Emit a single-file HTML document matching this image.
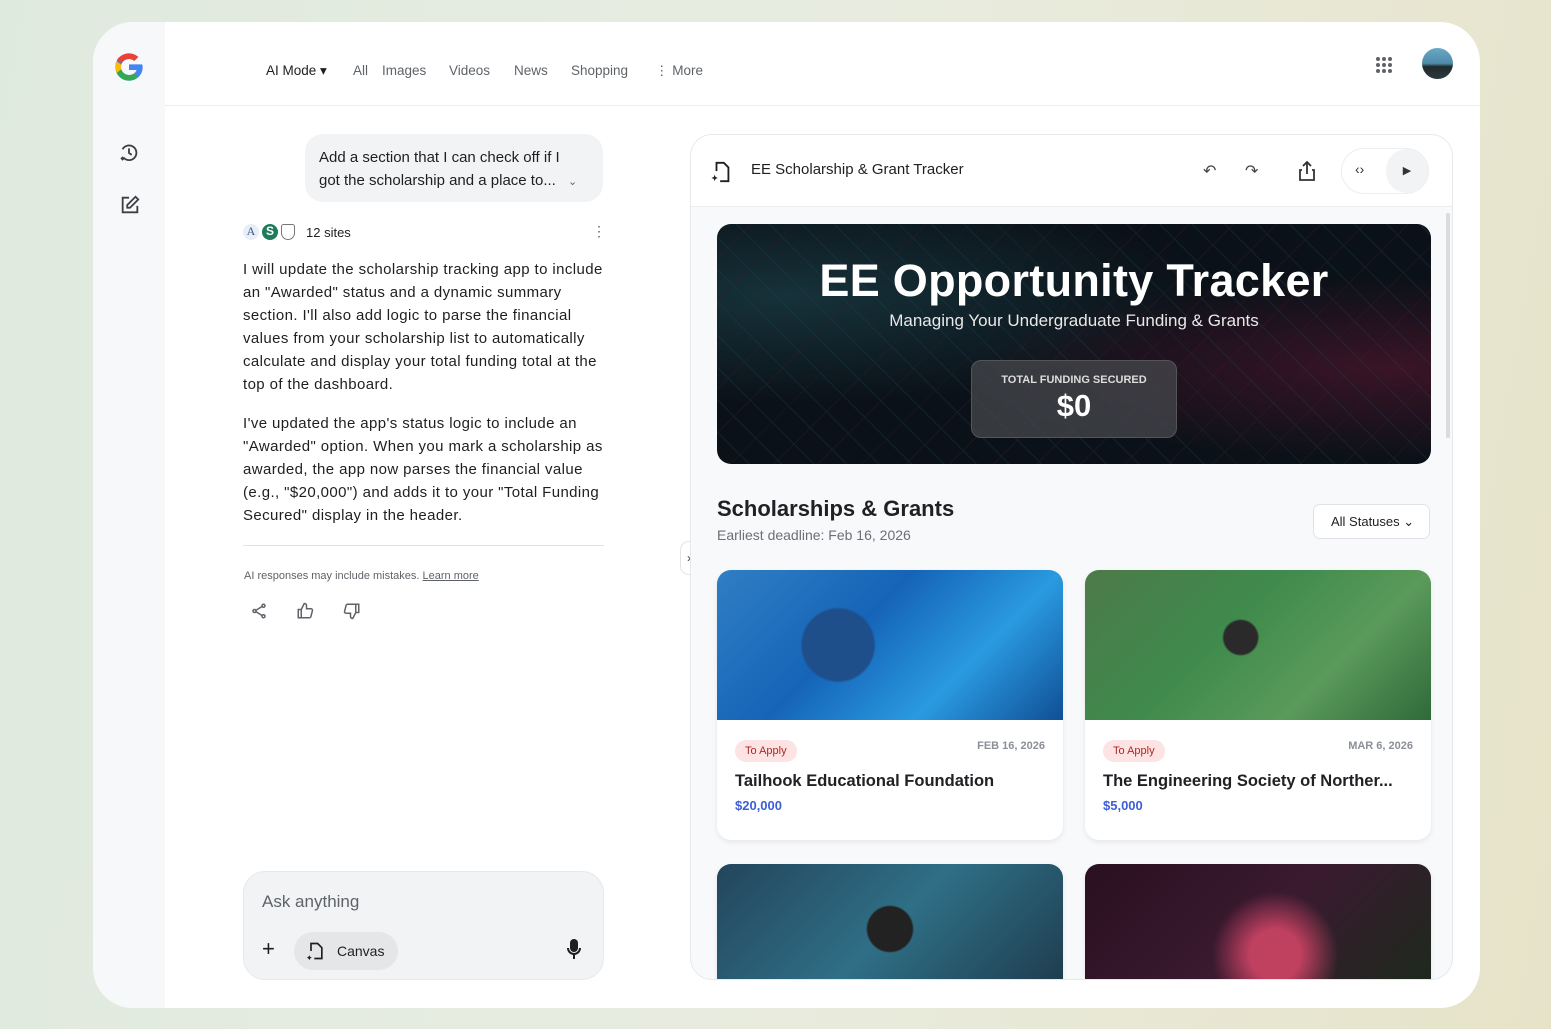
<!DOCTYPE html>
<html><head><meta charset="utf-8"><style>
*{box-sizing:border-box;margin:0;padding:0}
body{width:1551px;height:1029px;overflow:hidden;font-family:"Liberation Sans",sans-serif;background:linear-gradient(100deg,#dfeadf 0%,#e8ece0 50%,#e7e3c9 100%);position:relative;color:#1f1f1f}
.win{position:absolute;left:93px;top:22px;width:1387px;height:986px;background:#fff;border-radius:40px;overflow:hidden}
.side{position:absolute;left:0;top:0;width:72px;height:100%;background:#f7f8fa}
.hdr{position:absolute;left:72px;top:0;right:0;height:84px;border-bottom:1px solid #eceef0}
.nav{position:absolute;top:41px;font-size:13.5px;color:#5f6368}
.abs{position:absolute}
.bubble{position:absolute;left:212px;top:112px;width:298px;height:68px;background:#f1f3f4;border-radius:18px;padding:12px 14px;font-size:15px;line-height:23px;color:#1f1f1f}
.p{position:absolute;left:150px;width:380px;font-size:15px;line-height:23px;color:#1f1f1f;white-space:nowrap;letter-spacing:.4px}
.canvas{position:absolute;left:597px;top:112px;width:763px;height:846px;border:1px solid #e6e8eb;border-radius:22px;overflow:hidden;background:#f8f9fb}
.chdr{position:absolute;left:0;top:0;width:100%;height:72px;background:#fff;border-bottom:1px solid #eceef0}
.hero{position:absolute;left:26px;top:89px;width:714px;height:240px;border-radius:14px;background:radial-gradient(ellipse at 10% 30%,#16323a 0%,transparent 45%),radial-gradient(ellipse at 95% 60%,#3a1426 0%,transparent 45%),#0b1118;overflow:hidden;text-align:center;color:#fff}
.card{position:absolute;width:346px;background:#fff;border-radius:14px;overflow:hidden;box-shadow:0 2px 6px rgba(0,0,0,.08)}
.img{height:150px}
.tag{position:absolute;left:18px;top:170px;background:#fde3e3;color:#b3261e;font-size:11px;padding:5px 10px;border-radius:12px}
.date{position:absolute;right:18px;top:170px;font-size:11px;color:#8a8f98;font-weight:bold}
.ct{position:absolute;left:18px;top:202px;font-size:16.5px;font-weight:bold;color:#202124}
.amt{position:absolute;left:18px;top:228px;font-size:13px;font-weight:bold;color:#3c5fd6}
</style></head><body>
<div class="win">
 <div class="side">
  <svg class="abs" style="left:20px;top:29px" width="32" height="32" viewBox="0 0 48 48"><path d="M43.6 20H24v8.5h11.3C34 33 29.6 36 24 36c-6.6 0-12-5.4-12-12s5.4-12 12-12c3 0 5.8 1.1 7.9 3l6-6C34.3 5.7 29.4 3.5 24 3.5 12.7 3.5 3.5 12.7 3.5 24S12.7 44.5 24 44.5c11 0 20.5-8 20.5-20.5 0-1.4-.2-2.7-.9-4z" fill="#4285f4"/><path d="M6 13.4l7 5.1C14.8 14.6 19 12 24 12c3 0 5.8 1.1 7.9 3l6-6C34.3 5.7 29.4 3.5 24 3.5c-7.8 0-14.6 4.4-18 9.9z" fill="#ea4335"/><path d="M24 44.5c5.3 0 10.1-2 13.7-5.3l-6.4-5.3C29.3 35.3 26.8 36 24 36c-5.5 0-10-3.6-11.5-8.6l-7 5.4C9 39.9 15.9 44.5 24 44.5z" fill="#34a853"/><path d="M5.5 32.8l7-5.4c-.4-1.1-.5-2.2-.5-3.4s.2-2.3.5-3.4l-7-5.1C4.2 18.2 3.5 21 3.5 24s.7 5.9 2 8.8z" fill="#fbbc05"/></svg>
  <svg class="abs" style="left:25px;top:120px" width="22" height="22" viewBox="0 0 24 24" fill="none" stroke="#3c4043" stroke-width="2"><path d="M5 8a8 8 0 1 1 1 9"/><path d="M12 7v5l3 2"/><path d="M4 18l1 1 1-1-1-1z" fill="#3c4043"/></svg>
  <svg class="abs" style="left:26px;top:172px" width="22" height="22" viewBox="0 0 24 24" fill="none" stroke="#3c4043" stroke-width="2"><path d="M11 4H4v16h16v-7"/><path d="M18 3l3 3-9 9H9v-3z"/></svg>
 </div>
 <div class="hdr">
  <span class="nav" style="left:101px;color:#1f1f1f;top:41px">AI Mode ▾</span>
  <span class="nav" style="left:188px">All</span>
  <span class="nav" style="left:217px">Images</span>
  <span class="nav" style="left:284px">Videos</span>
  <span class="nav" style="left:349px">News</span>
  <span class="nav" style="left:406px">Shopping</span>
  <span class="nav" style="left:490px">⋮ More</span>
  <svg class="abs" style="left:1210px;top:34px" width="18" height="18" viewBox="0 0 18 18" fill="#5f6368"><circle cx="3" cy="3" r="2"/><circle cx="9" cy="3" r="2"/><circle cx="15" cy="3" r="2"/><circle cx="3" cy="9" r="2"/><circle cx="9" cy="9" r="2"/><circle cx="15" cy="9" r="2"/><circle cx="3" cy="15" r="2"/><circle cx="9" cy="15" r="2"/><circle cx="15" cy="15" r="2"/></svg>
  <div class="abs" style="left:1257px;top:26px;width:31px;height:31px;border-radius:50%;background:linear-gradient(#6aa9c6 0%,#4c8aa8 50%,#1f2a2c 60%,#2e3a3a 100%)"></div>
 </div>
 <div class="bubble">Add a section that I can check off if I<br>got the scholarship and a place to... <span style="color:#5f6368;font-size:11px;margin-left:8px">⌄</span></div>
 <div class="abs" style="left:150px;top:202px;font-size:13px;display:flex;align-items:center;gap:3px"><span style="width:16px;height:16px;border-radius:50%;background:#e8eef6;color:#3b5a8a;font-size:12px;text-align:center;font-family:'Liberation Serif'">A</span><span style="width:16px;height:16px;border-radius:50%;background:#1e7b5c;color:#fff;font-size:12px;text-align:center;font-weight:bold">S</span><span style="width:14px;height:16px;border:1.5px solid #777;border-radius:3px 3px 8px 8px"></span><span style="margin-left:8px">12 sites</span></div>
 <div class="abs" style="left:499px;top:201px;color:#5f6368;font-size:14px">⋮</div>
 <div class="p" style="top:236px">I will update the scholarship tracking app to include<br>an "Awarded" status and a dynamic summary<br>section. I'll also add logic to parse the financial<br>values from your scholarship list to automatically<br>calculate and display your total funding total at the<br>top of the dashboard.</div>
 <div class="p" style="top:390px">I've updated the app's status logic to include an<br>"Awarded" option. When you mark a scholarship as<br>awarded, the app now parses the financial value<br>(e.g., "$20,000") and adds it to your "Total Funding<br>Secured" display in the header.</div>
 <div class="abs" style="left:150px;top:523px;width:361px;border-top:1px solid #e3e3e3"></div>
 <div class="abs" style="left:151px;top:548px;font-size:11px;color:#5f6368">AI responses may include mistakes. <u>Learn more</u></div>
 <svg class="abs" style="left:157px;top:580px" width="18" height="18" viewBox="0 0 24 24" fill="none" stroke="#5f6368" stroke-width="2"><circle cx="18" cy="5" r="2"/><circle cx="6" cy="12" r="2"/><circle cx="18" cy="19" r="2"/><path d="M8 11l8-5M8 13l8 5"/></svg>
 <svg class="abs" style="left:203px;top:580px" width="18" height="18" viewBox="0 0 24 24" fill="none" stroke="#5f6368" stroke-width="2"><path d="M7 10v11H3V10zM7 10l4-8c2 0 3 1 3 3v4h6c1 0 2 1 2 2l-2 8c0 1-1 2-2 2H7"/></svg>
 <svg class="abs" style="left:250px;top:580px" width="18" height="18" viewBox="0 0 24 24" fill="none" stroke="#5f6368" stroke-width="2"><path d="M17 14V3h4v11zM17 14l-4 8c-2 0-3-1-3-3v-4H4c-1 0-2-1-2-2l2-8c0-1 1-2 2-2h11"/></svg>
 <div class="abs" style="left:150px;top:849px;width:361px;height:109px;background:#f1f3f4;border-radius:22px;border:1px solid #e6e8ea">
  <div class="abs" style="left:18px;top:20px;font-size:17px;color:#5f6368">Ask anything</div>
  <div class="abs" style="left:18px;top:64px;font-size:22px;color:#1f1f1f">+</div>
  <div class="abs" style="left:50px;top:60px;width:104px;height:38px;background:#e4e6e8;border-radius:19px"><svg class="abs" style="left:12px;top:9px" width="20" height="20" viewBox="0 0 24 24" fill="none" stroke="#1f1f1f" stroke-width="2"><path d="M6 12V3h8l5 5v13h-9"/><path d="M4 17l1 2 2 1-2 1-1 2-1-2-2-1 2-1z" fill="#1f1f1f" stroke="none"/></svg><span class="abs" style="left:43px;top:11px;font-size:14px">Canvas</span></div>
  <svg class="abs" style="left:322px;top:66px" width="16" height="22" viewBox="0 0 16 22" fill="#1f1f1f"><rect x="4" y="1" width="8" height="13" rx="4"/><path d="M1 10a7 7 0 0 0 14 0h-2a5 5 0 0 1-10 0z"/><rect x="7" y="16" width="2" height="5"/></svg>
 </div>
 <div class="abs" style="left:587px;top:519px;width:18px;height:34px;background:#fff;border:1px solid #e3e3e3;border-radius:9px;font-size:12px;text-align:center;line-height:32px;color:#3c4043">›</div>
 <div class="canvas">
  <div class="chdr">
   <svg class="abs" style="left:20px;top:25px" width="22" height="24" viewBox="0 0 24 24" fill="none" stroke="#1f1f1f" stroke-width="2"><path d="M6 11V2h8l5 5v15h-9"/><path d="M4 15l1 2.5 2.5 1-2.5 1L4 22l-1-2.5-2.5-1 2.5-1z" fill="#1f1f1f" stroke="none"/></svg>
   <div class="abs" style="left:60px;top:26px;font-size:15px;color:#1f1f1f">EE Scholarship &amp; Grant Tracker</div>
   <div class="abs" style="left:512px;top:26px;font-size:16px;color:#444">↶</div>
   <div class="abs" style="left:554px;top:26px;font-size:16px;color:#444">↷</div>
   <svg class="abs" style="left:608px;top:26px" width="16" height="20" viewBox="0 0 16 20" fill="none" stroke="#333" stroke-width="1.8"><path d="M8 1v12M4 5l4-4 4 4M3 9H1v10h14V9h-2"/></svg>
   <div class="abs" style="left:650px;top:13px;width:88px;height:46px;border:1px solid #eceef0;border-radius:23px"></div>
   <div class="abs" style="left:664px;top:26px;font-size:14px;color:#333">‹›</div>
   <div class="abs" style="left:695px;top:14px;width:42px;height:44px;border-radius:22px;background:#f1f3f4;font-size:11px;text-align:center;line-height:44px;color:#333">▶</div>
  </div>
  <div class="abs" style="left:755px;top:78px;width:4px;height:225px;background:#d9dbde;border-radius:2px"></div>
  <div class="hero">
   <div style="position:absolute;inset:0;opacity:.35;background:repeating-linear-gradient(45deg,transparent 0 22px,#1d4450 22px 23px),repeating-linear-gradient(-45deg,transparent 0 30px,#3c1a2c 30px 31px)"></div>
   <div style="position:relative;margin-top:31px;font-size:45px;font-weight:bold;letter-spacing:.3px">EE Opportunity Tracker</div>
   <div style="position:relative;margin-top:4px;font-size:17px;color:#e8e8e8">Managing Your Undergraduate Funding &amp; Grants</div>
   <div style="position:absolute;left:254px;top:136px;width:206px;height:78px;background:rgba(70,72,76,.75);border:1px solid #555;border-radius:10px">
    <div style="margin-top:13px;font-size:11px;font-weight:bold;color:#ddd">TOTAL FUNDING SECURED</div>
    <div style="font-size:31px;font-weight:bold;margin-top:2px">$0</div>
   </div>
  </div>
  <div class="abs" style="left:26px;top:361px;font-size:22px;font-weight:bold;color:#202124">Scholarships &amp; Grants</div>
  <div class="abs" style="left:26px;top:392px;font-size:14px;color:#6b6f76">Earliest deadline: Feb 16, 2026</div>
  <div class="abs" style="left:622px;top:369px;width:117px;height:35px;background:#fff;border:1px solid #e0e2e5;border-radius:7px;font-size:13px;line-height:33px;padding-left:17px">All Statuses ⌄</div>
  <div class="card" style="left:26px;top:435px;height:270px"><div class="img" style="background:radial-gradient(circle at 35% 50%,#1f4f8a 0 15%,transparent 16%),linear-gradient(135deg,#2f7fc4,#1564b8 40%,#2a9ae0 70%,#0f4f95)"></div>
   <div class="tag">To Apply</div><div class="date">FEB 16, 2026</div><div class="ct">Tailhook Educational Foundation</div><div class="amt">$20,000</div></div>
  <div class="card" style="left:394px;top:435px;height:270px"><div class="img" style="background:radial-gradient(circle at 45% 45%,#2a2a2a 0 8%,transparent 9%),linear-gradient(135deg,#4d7a4a,#3f8a4c 40%,#5a9a5a 70%,#2f6a3a)"></div>
   <div class="tag">To Apply</div><div class="date">MAR 6, 2026</div><div class="ct">The Engineering Society of Norther...</div><div class="amt">$5,000</div></div>
  <div class="card" style="left:26px;top:729px;height:130px"><div style="height:130px;background:radial-gradient(circle at 50% 50%,#222 0 12%,transparent 13%),linear-gradient(135deg,#23455c,#2f6f86 50%,#1e3a4c)"></div></div>
  <div class="card" style="left:394px;top:729px;height:130px"><div style="height:130px;background:radial-gradient(circle at 55% 70%,#c04060 0 12%,transparent 30%),linear-gradient(135deg,#2a1020,#3a1a30 50%,#1c2a1c)"></div></div>
 </div>
</div>
</body></html>
